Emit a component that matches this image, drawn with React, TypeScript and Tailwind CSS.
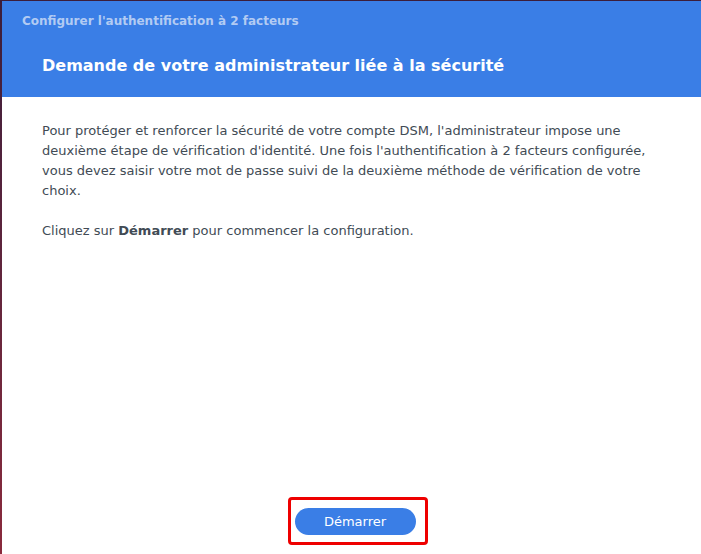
const App = () => {
  return (
    <div className="h-[554px] w-[701px] overflow-hidden bg-gradient-to-b from-[#3b1d3a] to-[#8a2a3c] pl-[2px] pt-[1px] font-['DejaVu_Sans',sans-serif]">
      <div className="flex h-full flex-col bg-white">
        {/* Header */}
        <header className="h-[96px] shrink-0 bg-[#3a7ee6] pl-[20px]">
          <div className="pt-[12px] text-[12px] font-bold leading-[16px] text-[#b2cbf3]">
            Configurer l'authentification à 2 facteurs
          </div>
          <h1 className="pl-[20px] pt-[26px] text-[16px] font-bold leading-[22px] text-white">
            Demande de votre administrateur liée à la sécurité
          </h1>
        </header>

        {/* Body */}
        <main className="flex flex-1 flex-col whitespace-nowrap px-[40px] pt-[24px] text-[13px] leading-[20px] text-[#414b55]">
          <p>
            Pour protéger et renforcer la sécurité de votre compte DSM, l'administrateur impose une
            <br />
            deuxième étape de vérification d'identité. Une fois l'authentification à 2 facteurs configurée,
            <br />
            vous devez saisir votre mot de passe suivi de la deuxième méthode de vérification de votre
            <br />
            choix.
          </p>
          <p className="mt-[20px]">
            Cliquez sur <span className="font-bold">Démarrer</span> pour commencer la configuration.
          </p>
        </main>

        {/* Footer */}
        <footer className="flex shrink-0 justify-center pb-[9px] pl-[12px]">
          <div className="rounded-[4px] border-[3px] border-[#ee0000] pb-[7px] pl-[4px] pr-[9px] pt-[8px]">
            <button className="h-[27px] w-[121px] rounded-full bg-[#3a7ee6] text-[13px] text-white">
              Démarrer
            </button>
          </div>
        </footer>
      </div>
    </div>
  );
};

export default App;
